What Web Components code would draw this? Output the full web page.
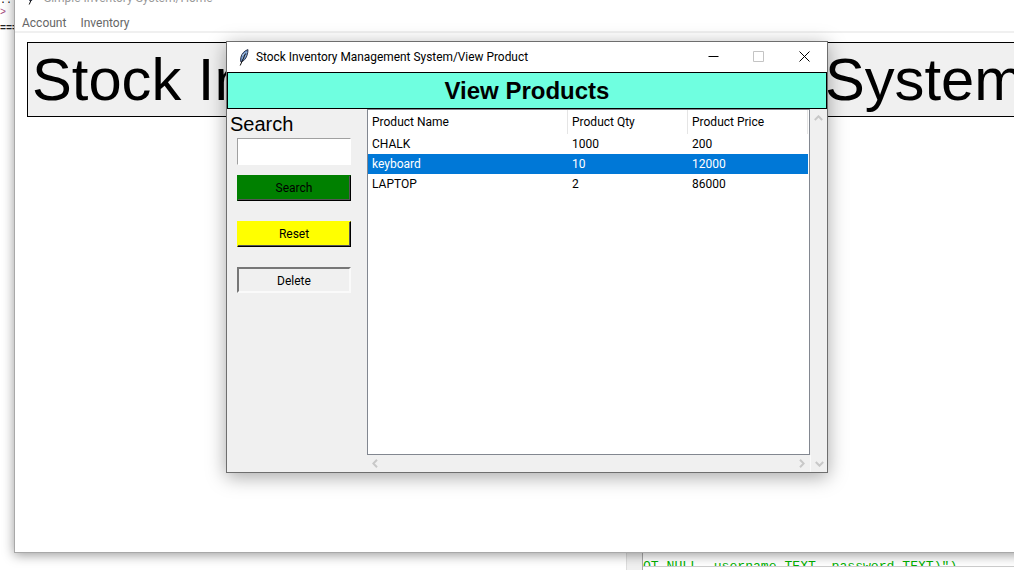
<!DOCTYPE html>
<html>
<head>
<meta charset="utf-8">
<title>Stock Inventory</title>
<style>
  html, body { margin: 0; height: 100%; overflow: hidden; background: #fff; }
  body { position: relative; width: 1014px; height: 570px; font-family: Roboto, sans-serif; }
</style>
</head>
<body>

<back-window></back-window>
<product-window></product-window>

<script>
class FeatherIcon extends HTMLElement {
  constructor(){
    super();
    const shadow = this.attachShadow({ mode: "open" });
    shadow.innerHTML = `
    <style>
      :host { display: block; width: 10px; height: 17px; flex: none; }
      svg { display: block; }
    </style>
    <svg width="10" height="17" viewBox="0 0 10 17">
      <path d="M9 .6C5.800 1.400 2.600 4.600 1.800 8.500c-.4 1.800-.3 3.400 .1 4.500C4.800 12.200 7 9.600 8 6.500c.6-1.900 1.100-4 1-5.900z" fill="#6a92c8" stroke="#252a40" stroke-width=".9"/>
      <path d="M7.500 3.500 3 6.500M7 6.500 3 9.500" stroke="#dfe8f4" stroke-width=".7" fill="none"/>
      <path d="M6.500 4.500 1.200 16.500" stroke="#111" stroke-width="1" fill="none"/>
    </svg>`;
  }
}

// the home window behind, with the editor peeking out around it
class BackWindow extends HTMLElement {
  constructor(){
    super();
    const shadow = this.attachShadow({ mode: "open" });
    shadow.innerHTML = `
    <style>
      :host { display: block; position: absolute; inset: 0; overflow: hidden; }
      .editor-left { position: absolute; left: 0; top: 0; width: 14px; height: 36px; overflow: hidden;
        font: 10px/14px "Liberation Mono", monospace; }
      .editor-left div { white-space: pre; }
      .editor-left .a { height: 14px; margin-top: -6px; color: #000; }
      .editor-left .b { height: 10px; line-height: 10px; color: #a3487a; }
      .editor-left .c { height: 14px; margin-top: 4px; color: #222; font-weight: bold; }
      .editor-bottom { position: absolute; left: 626px; top: 553px; right: 0; height: 17px; background: #fff;
        display: flex; overflow: hidden; }
      .gutter { width: 17px; background: #f0f0f0; border-left: 1px solid #ddd; border-right: 1px solid #aaa; flex: none; box-sizing: border-box; }
      .code { font: 13.1px/16px "Liberation Mono", monospace; color: #00b000; white-space: pre; padding-top: 6px;
        flex: 1; height: 7px; border-bottom: 1px solid #ccc; overflow: hidden; }
      .win { position: absolute; left: 14px; top: -12px; width: 1020px; height: 565px; background: #fff;
        border: 1px solid #a8a8a8; border-right: 0; border-top: 0; box-sizing: border-box;
        box-shadow: 0 2px 11px rgba(0,0,0,.4); display: flex; flex-direction: column; }
      .title { height: 26px; flex: none; display: flex; align-items: flex-start; font-size: 12px; line-height: 20px; color: #999; overflow: hidden; }
      .title feather-icon { margin: 0 6px 0 13px; }
      .title .mx { margin: 1px 58px 0 auto; width: 11px; height: 11px; border: 1px solid #ddd; box-sizing: border-box; }
      .menu { height: 17px; flex: none; display: flex; gap: 14px; padding-left: 7px; align-items: center;
        font-size: 12px; color: #666; border-bottom: 2px solid #f0f0f0; }
      .banner { margin: 9px 0 0 12px; height: 75px; width: 1040px; box-sizing: border-box; flex: none;
        background: #f0f0f0; border: 1px solid #000; font: 59.7px/73px "Liberation Sans", sans-serif;
        color: #000; padding-left: 4px; white-space: nowrap; }
    </style>
    <div class="editor-left"><div class="a">::</div><div class="b">&gt;</div><div class="c">===</div></div>
    <div class="editor-bottom"><div class="gutter"></div><div class="code">OT NULL, username TEXT, password TEXT)")</div></div>
    <div class="win">
      <div class="title"><feather-icon></feather-icon><span>Simple Inventory System/Home</span><span class="mx"></span></div>
      <div class="menu"><span>Account</span><span>Inventory</span></div>
      <div class="banner">Stock Inventory Management System</div>
    </div>`;
  }
}

class ActionButton extends HTMLElement {
  constructor(){
    super();
    const shadow = this.attachShadow({ mode: "open" });
    shadow.innerHTML = `
    <style>
      :host { display: flex; align-items: center; justify-content: center; box-sizing: border-box;
        width: 114px; height: 26px; font-size: 12px; color: #000; background: var(--bg, #f0f0f0);
        border: 1px solid; border-color: var(--bg, #fff) #000 #000 var(--bg, #fff);
        box-shadow: inset -1px -1px 0 #555; }
      :host([sunken]) { border: 2px solid; border-color: #777 #fafafa #fafafa #777; box-shadow: none; padding-top: 2px; }
    </style>
    <slot></slot>`;
  }
}

class ProductTable extends HTMLElement {
  constructor(){
    super();
    const shadow = this.attachShadow({ mode: "open" });
    const rows = [
      ["CHALK", "1000", "200"],
      ["keyboard", "10", "12000", true],
      ["LAPTOP", "2", "86000"]
    ];
    shadow.innerHTML = `
    <style>
      :host { display: grid; grid-template-columns: 443px 17px; grid-template-rows: 346px 17px;
        width: 460px; font-size: 12px; color: #000; }
      .list { box-sizing: border-box; background: #fff; border: 1px solid #828790; overflow: hidden; }
      .head, .row { display: grid; grid-template-columns: 200px 120px 120px; }
      .head { height: 24px; }
      .head span { padding-left: 4px; line-height: 24px; border-right: 1px solid #e5e5e5; }
      .row { height: 20px; line-height: 20px; width: 440px; }
      .row span { padding-left: 4px; }
      .row.sel { background: #0078d7; color: #fff; }
      .v, .h { background: #f0f0f0; position: relative; }
      .corner { background: #f0f0f0; display: flex; align-items: center; justify-content: center; border-left: 1px solid #fafafa; box-sizing: border-box; }
      svg { display: block; }
      .v svg, .h svg { position: absolute; }
      .v .up { left: 4px; top: 6px; }
      .h .left { left: 5px; top: 4px; }
      .h .right { right: 5px; top: 4px; }
    </style>
    <div class="list">
      <div class="head"><span>Product Name</span><span>Product Qty</span><span>Product Price</span></div>
      ${rows.map(r => `<div class="row${r[3] ? " sel" : ""}"><span>${r[0]}</span><span>${r[1]}</span><span>${r[2]}</span></div>`).join("")}
    </div>
    <div class="v"><svg class="up" width="9" height="6" viewBox="0 0 9 6"><path d="M.8 5 4.500 1.300 8.200 5" fill="none" stroke="#c8c8c8" stroke-width="2"/></svg></div>
    <div class="h">
      <svg class="left" width="6" height="9" viewBox="0 0 6 9"><path d="M5 .8 1.300 4.500 5 8.200" fill="none" stroke="#c8c8c8" stroke-width="2"/></svg>
      <svg class="right" width="6" height="9" viewBox="0 0 6 9"><path d="M1 .8 4.700 4.500 1 8.200" fill="none" stroke="#c8c8c8" stroke-width="2"/></svg>
    </div>
    <div class="corner"><svg width="9" height="6" viewBox="0 0 9 6"><path d="M.8 1 4.500 4.700 8.200 1" fill="none" stroke="#c8c8c8" stroke-width="2"/></svg></div>`;
  }
}

// the view product dialog on top
class ProductWindow extends HTMLElement {
  constructor(){
    super();
    const shadow = this.attachShadow({ mode: "open" });
    shadow.innerHTML = `
    <style>
      :host { display: flex; flex-direction: column; position: absolute; left: 226px; top: 41px; width: 602px; height: 432px;
        box-sizing: border-box; background: #f0f0f0; border: 1px solid #6e6e6e;
        box-shadow: 0 4px 18px rgba(0,0,0,.35); }
      .bar { height: 30px; flex: none; background: #fff; display: flex; align-items: center; font-size: 11.9px; color: #000; }
      .bar feather-icon { margin: 0 7px 0 12px; }
      .bar .t { flex: 1; }
      .ctl { width: 45px; height: 30px; display: flex; align-items: center; justify-content: center; flex: none; }
      .ctl.x { width: 46px; }
      .ctl svg { margin-bottom: 2px; }
      .hd { height: 37px; flex: none; box-sizing: border-box; background: #6fffe0; border: 1px solid #000;
        font: bold 24px/35px "Liberation Sans", sans-serif; text-align: center; color: #000; }
      .body { flex: 1; display: flex; min-height: 0; }
      .side { width: 140px; flex: none; display: flex; flex-direction: column; }
      .side h2 { margin: 3px 0 0 3px; font: 20px/24px "Liberation Sans", sans-serif; color: #000; font-weight: normal; }
      .side input { box-sizing: border-box; width: 114px; height: 27px; margin: 2px 0 10px 10px; background: #fff;
        border: 1px solid; border-color: #a0a0a0 #fff #fff #a0a0a0; padding: 0; outline: 0; }
      action-button { margin-left: 10px; }
      .gap { margin-top: 20px; }
    </style>
    <div class="bar">
      <feather-icon></feather-icon>
      <span class="t">Stock Inventory Management System/View Product</span>
      <span class="ctl"><svg width="11" height="11" viewBox="0 0 11 11"><path d="M.5 5.500h10" stroke="#000" fill="none"/></svg></span>
      <span class="ctl"><svg width="11" height="11" viewBox="0 0 11 11"><path d="M.5 .5h10v10h-10z" stroke="#c4c4c4" fill="none"/></svg></span>
      <span class="ctl x"><svg width="11" height="11" viewBox="0 0 11 11"><path d="M.5 .5l10 10M10.500 .5l-10 10" stroke="#000" fill="none"/></svg></span>
    </div>
    <div class="hd">View Products</div>
    <div class="body">
      <div class="side">
        <h2>Search</h2>
        <input type="text">
        <action-button style="--bg:#008000">Search</action-button>
        <action-button class="gap" style="--bg:#ffff00">Reset</action-button>
        <action-button class="gap" sunken>Delete</action-button>
      </div>
      <product-table></product-table>
    </div>`;
  }
}

customElements.define('feather-icon', FeatherIcon);
customElements.define('back-window', BackWindow);
customElements.define('action-button', ActionButton);
customElements.define('product-table', ProductTable);
customElements.define('product-window', ProductWindow);
</script>
</body>
</html>
